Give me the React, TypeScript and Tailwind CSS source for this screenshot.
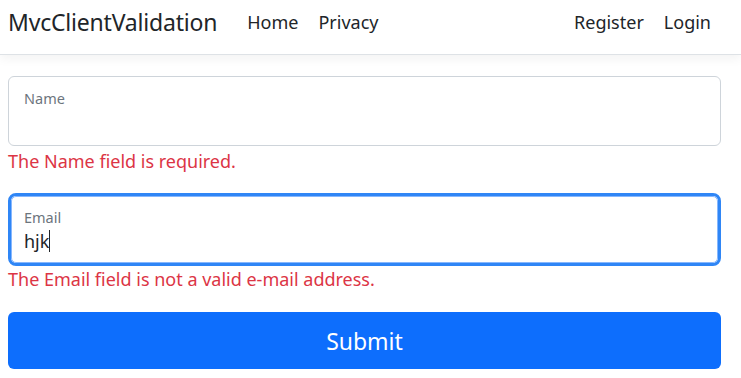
export default function App() {
  return (
    <div className="min-h-screen bg-white text-[#212529] font-['Noto_Sans',sans-serif]">
      <header className="h-[55px] border-b border-[#dee2e6] shadow-[0_4px_10px_rgba(0,0,0,0.05)] flex items-center pl-2 pr-[30px] pb-[10px]">
        <a className="text-[23px] tracking-[-0.2px] mr-[30px] leading-none">MvcClientValidation</a>
        <nav className="flex gap-[20px] text-[18px] leading-none">
          <a>Home</a>
          <a>Privacy</a>
        </nav>
        <nav className="ml-auto flex gap-[20px] text-[18px] leading-none">
          <a>Register</a>
          <a>Login</a>
        </nav>
      </header>

      <main className="pl-2 pr-[20px] pt-[21px]">
        <div className="relative h-[70px] rounded-[6px] border border-[#ced4da] bg-white">
          <label className="absolute left-[15px] top-[11px] text-[14.5px] text-[#6c757d]">Name</label>
        </div>
        <div className="text-[18px] text-[#dc3545] mt-[3px] leading-[24px]">The Name field is required.</div>

        <div className="mt-[20px] rounded-[8px] border-[3px] border-[#2f86f6]">
          <div className="relative h-[67px] rounded-[5px] border border-[#86b7fe] bg-white">
            <label className="absolute left-[12px] top-[10px] text-[14.5px] text-[#6c757d]">Email</label>
            <div className="absolute left-[12px] top-[32px] text-[18px] leading-[24px] flex items-center">
              hjk<span className="inline-block w-px h-[22px] bg-[#212529]" />
            </div>
          </div>
        </div>
        <div className="text-[18px] text-[#dc3545] mt-[1px] leading-[24px]">The Email field is not a valid e-mail address.</div>

        <button className="mt-[21px] w-full h-[57px] rounded-[6px] bg-[#0d6efd] text-white text-[23px] pt-[2px]">Submit</button>
      </main>
    </div>
  );
}
